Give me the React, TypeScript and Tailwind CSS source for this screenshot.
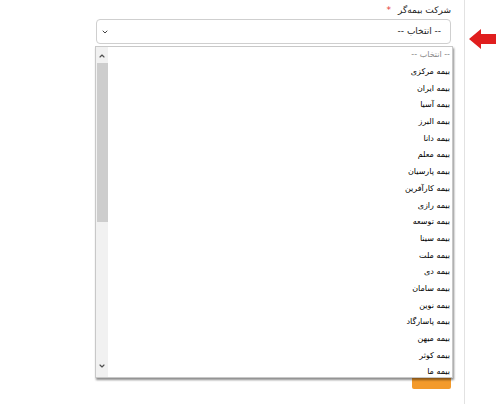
import { ChevronDown, ChevronUp } from "lucide-react";

const items = [
  "بیمه مرکزی",
  "بیمه ایران",
  "بیمه آسیا",
  "بیمه البرز",
  "بیمه دانا",
  "بیمه معلم",
  "بیمه پارسیان",
  "بیمه کارآفرین",
  "بیمه رازی",
  "بیمه توسعه",
  "بیمه سینا",
  "بیمه ملت",
  "بیمه دی",
  "بیمه سامان",
  "بیمه نوین",
  "بیمه پاسارگاد",
  "بیمه میهن",
  "بیمه کوثر",
  "بیمه ما",
];

export default function App() {
  return (
    <div
      className="flex w-[500px] h-[404px] bg-white overflow-hidden"
      style={{ fontFamily: '"DejaVu Sans", sans-serif' }}
    >
      {/* FORM COLUMN */}
      <div className="w-[465px] h-full border-r border-[#e2e2e2] pr-[13px] pl-[96px] pt-[3px] relative">
        <div dir="rtl" className="text-[9px] text-[#222] h-[16px] flex items-center gap-[7px]">
          <span>شرکت بیمه‌گر</span>
          <span className="text-[#e53935]">*</span>
        </div>

        {/* SELECT */}
        <div className="h-[25px] border border-[#cfcfcf] rounded-[4px] flex items-center justify-between px-[4px]">
          <ChevronDown className="w-[8px] h-[8px] text-[#444]" strokeWidth={3} />
          <span dir="rtl" className="text-[9px] text-[#222] pr-[5px]">-- انتخاب --</span>
        </div>

        {/* HIDDEN BUTTON BEHIND LIST */}
        <div className="flex justify-end mt-[320px]">
          <div className="w-[39px] h-[25px] bg-[#f39a2b] rounded-[2px]" />
        </div>

        {/* DROPDOWN */}
        <div className="absolute left-[95px] top-[46px] w-[358px] h-[332px] bg-white border border-[#c8c8c8] shadow-[1px_2px_2px_rgba(0,0,0,0.45)] flex">
          <div className="w-[12px] h-full bg-[#f1f1f1] flex flex-col items-center">
            <ChevronUp className="w-[8px] h-[8px] mt-[5px] text-[#505050]" strokeWidth={3.5} />
            <div className="w-[11px] h-[159px] bg-[#cdcdcd] mt-[3px]" />
            <div className="flex-1" />
            <ChevronDown className="w-[8px] h-[8px] mb-[7px] text-[#505050]" strokeWidth={3.5} />
          </div>
          <div dir="rtl" className="flex-1 pr-[2px] pt-[0px] overflow-hidden">
            <div className="h-[16.7px] flex items-center text-[8px] text-[#888]">-- انتخاب --</div>
            {items.map((it) => (
              <div key={it} className="h-[16.7px] flex items-center text-[8px] text-[#000]">
                {it}
              </div>
            ))}
          </div>
        </div>
      </div>

      {/* ARROW */}
      <div className="flex-1 pt-[29px] flex justify-center">
        <svg width="27" height="20" viewBox="0 0 27 20">
          <path d="M0 10 L12 0 L12 5 L27 5 L27 15 L12 15 L12 20 Z" fill="#e01e1e" />
        </svg>
      </div>
    </div>
  );
}
